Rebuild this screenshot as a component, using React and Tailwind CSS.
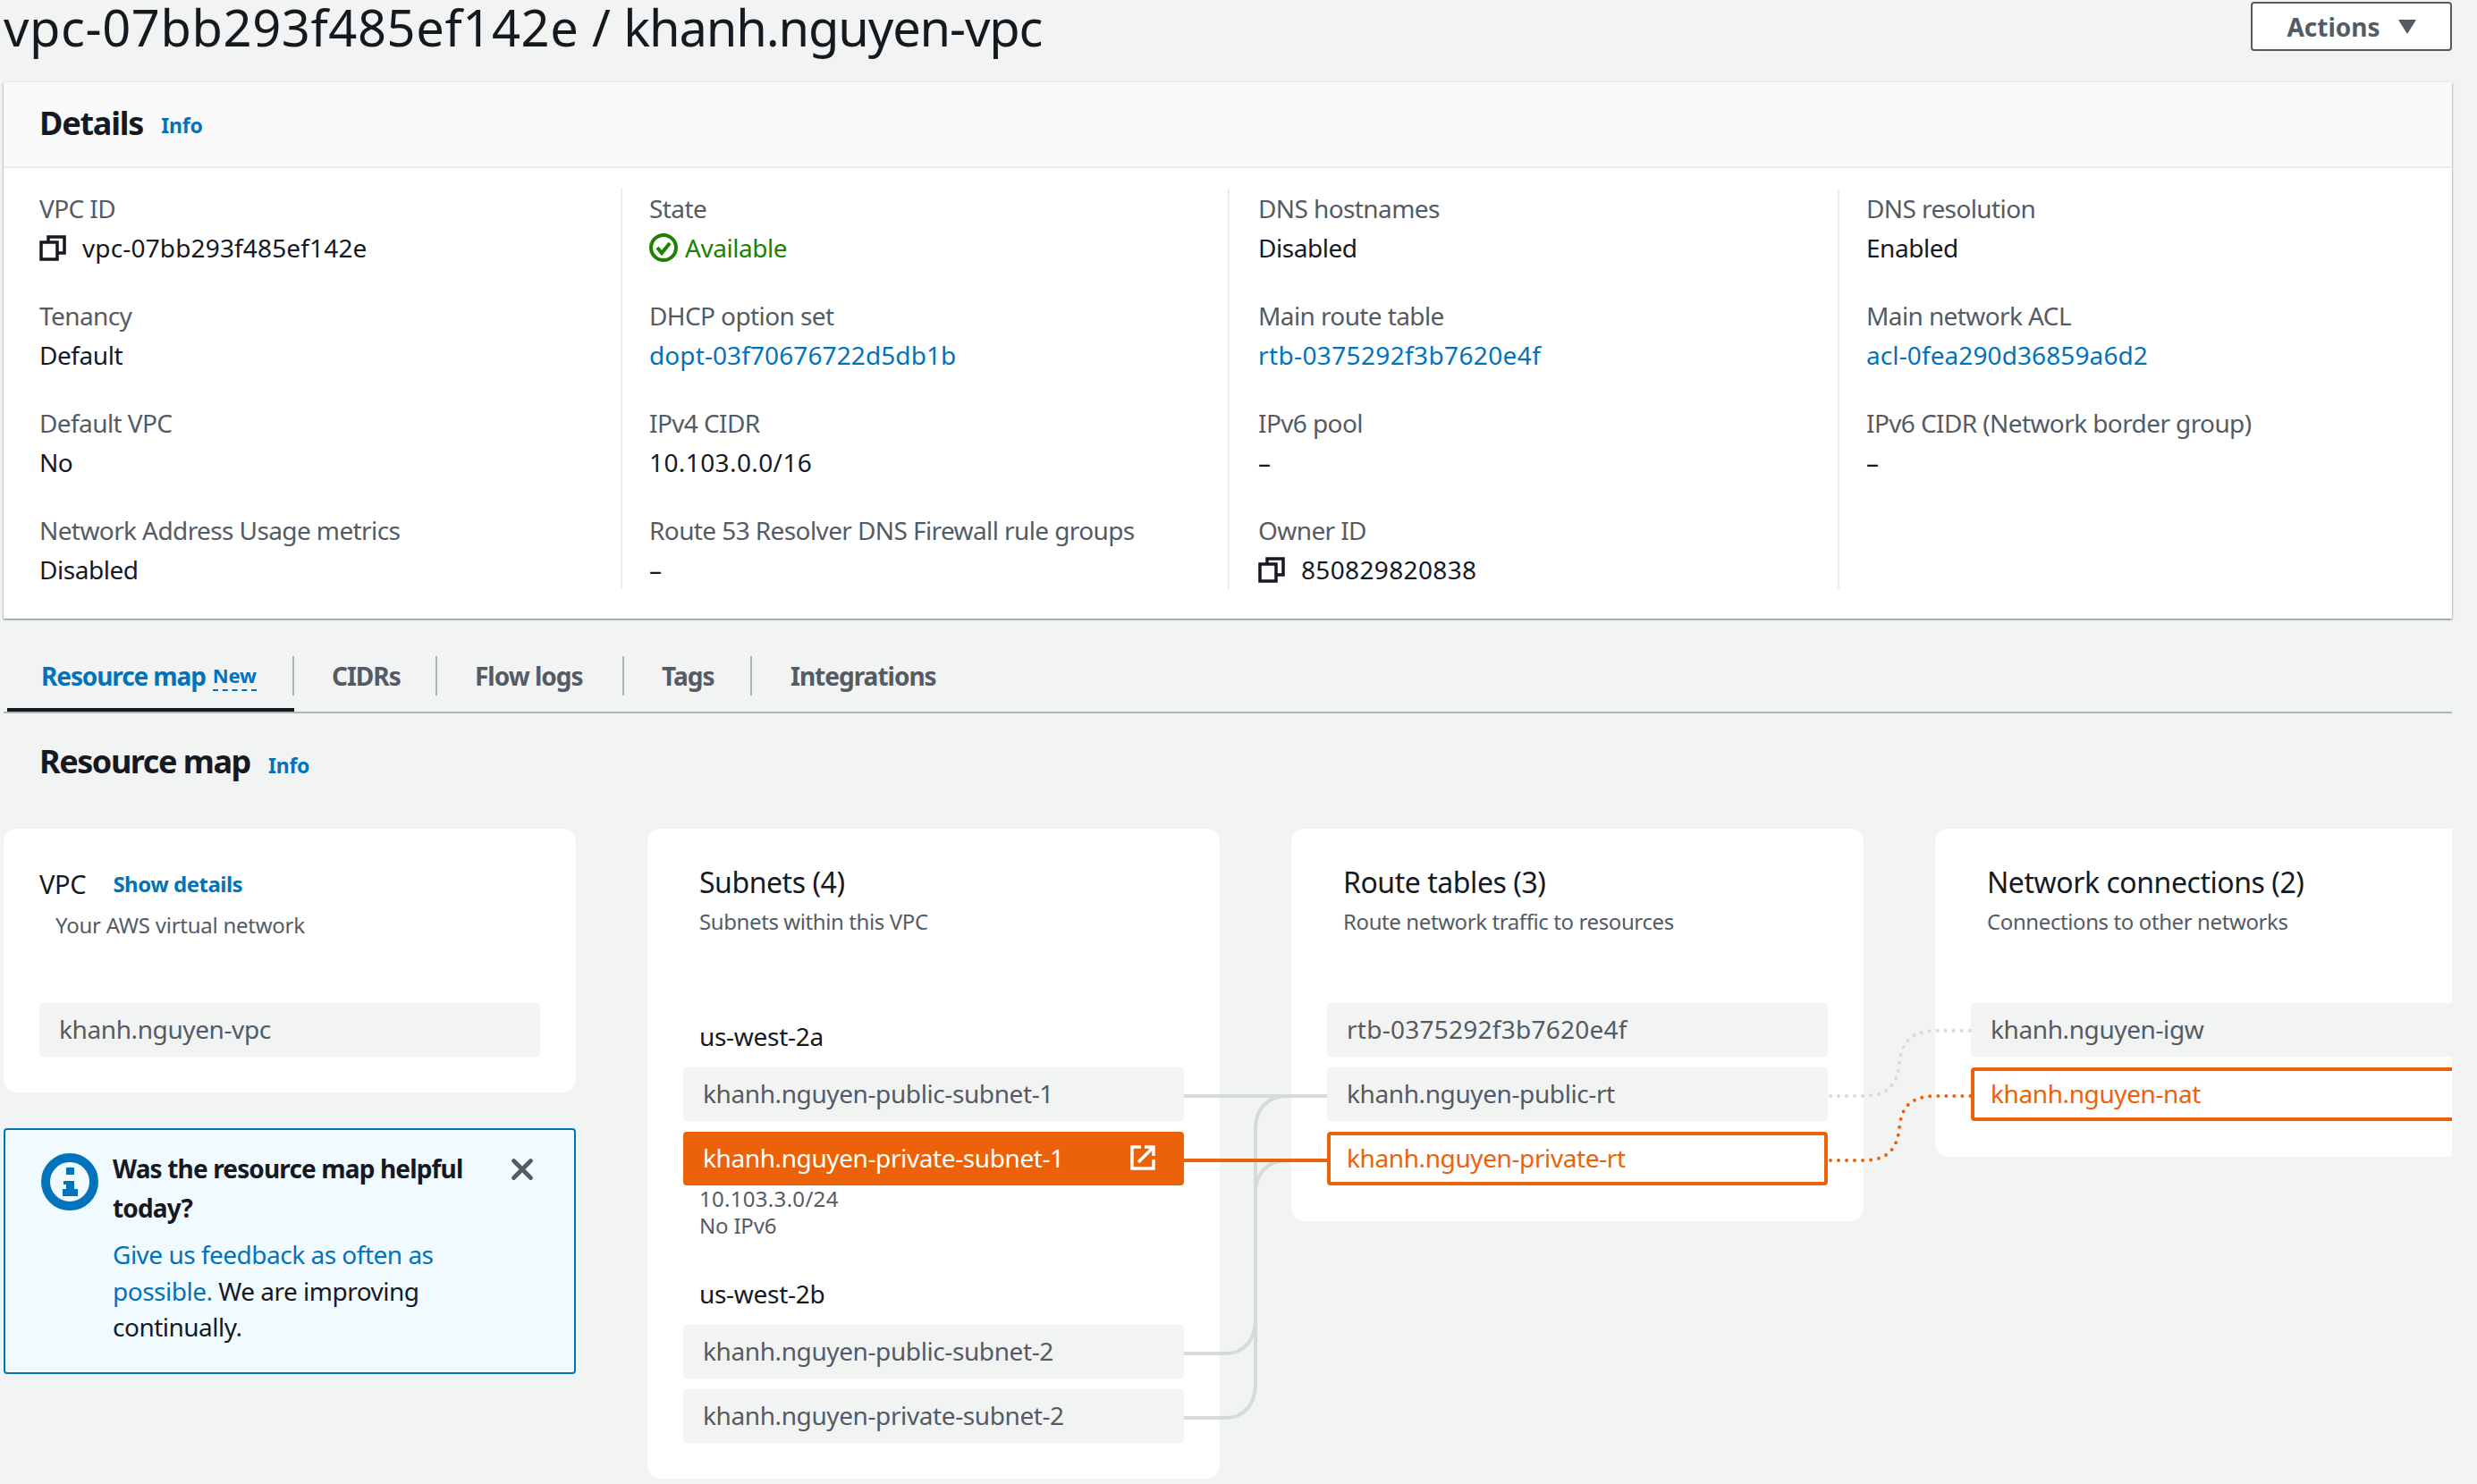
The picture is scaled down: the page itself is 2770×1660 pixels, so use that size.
import { X } from "lucide-react";

const font = { fontFamily: '"Noto Sans", sans-serif' };

const details = [
  [
    { label: "VPC ID", value: "vpc-07bb293f485ef142e", copy: true, track: "tracking-[0.15px]" },
    { label: "Tenancy", value: "Default" },
    { label: "Default VPC", value: "No" },
    { label: "Network Address Usage metrics", value: "Disabled" },
  ],
  [
    { label: "State", status: "Available" },
    { label: "DHCP option set", value: "dopt-03f70676722d5db1b", link: true, track: "tracking-[0.1px]" },
    { label: "IPv4 CIDR", value: "10.103.0.0/16", track: "tracking-[0.4px]" },
    { label: "Route 53 Resolver DNS Firewall rule groups", value: "–" },
  ],
  [
    { label: "DNS hostnames", value: "Disabled" },
    { label: "Main route table", value: "rtb-0375292f3b7620e4f", link: true, track: "tracking-[0.37px]" },
    { label: "IPv6 pool", value: "–" },
    { label: "Owner ID", value: "850829820838", copy: true, track: "tracking-[0.35px]" },
  ],
  [
    { label: "DNS resolution", value: "Enabled" },
    { label: "Main network ACL", value: "acl-0fea290d36859a6d2", link: true, track: "tracking-[0.1px]" },
    { label: "IPv6 CIDR (Network border group)", value: "–" },
  ],
];

const tabs = [
  { name: "CIDRs", width: "w-[160px]" },
  { name: "Flow logs", width: "w-[209px]" },
  { name: "Tags", width: "w-[143px]" },
  { name: "Integrations", width: "w-[300px]" },
];

function CopyIcon() {
  return (
    <svg width="30" height="30" viewBox="0 0 30 30" fill="none" stroke="#16191f" strokeWidth="3.5" className="shrink-0">
      <rect x="2" y="9" width="18" height="19" />
      <path d="M10 9V3h18v18h-8" />
    </svg>
  );
}

function StatusIcon() {
  return (
    <svg width="32" height="32" viewBox="0 0 32 32" fill="none" stroke="#1d8102" strokeWidth="4" className="shrink-0">
      <circle cx="16" cy="16" r="14" />
      <path d="M9 16l5 6 9-11" />
    </svg>
  );
}

function InfoIcon() {
  return (
    <svg width="64" height="64" viewBox="0 0 64 64" className="shrink-0">
      <circle cx="32" cy="32" r="27" fill="none" stroke="#0073bb" strokeWidth="10" />
      <rect x="28" y="16" width="9" height="8" fill="#0073bb" />
      <path d="M25 31H37V40H41V48H24V40H28V35H25Z" fill="#0073bb" />
    </svg>
  );
}

function ExternalIcon() {
  return (
    <svg width="28" height="28" viewBox="0 0 28 28" fill="none" stroke="#fff" strokeWidth="3.5" className="shrink-0">
      <path d="M12 2H2V26H26V16" />
      <path d="M9 19L24 4" />
      <path d="M16 2H26V12" />
    </svg>
  );
}

function Field({ item }) {
  return (
    <div className="h-[88px]">
      <div className="h-[44px] text-[28px] leading-[44px] tracking-[-0.6px] text-[#545b64]">{item.label}</div>
      <div className="flex h-[44px] items-center gap-[18px] text-[28px] tracking-[-0.45px]">
        {item.copy && <CopyIcon />}
        {item.status ? (
          <span className="flex items-center gap-[8px] text-[#1d8102]">
            <StatusIcon />
            {item.status}
          </span>
        ) : (
          <span className={`${item.link ? "text-[#0073bb]" : "text-[#16191f]"} ${item.track || ""}`}>{item.value}</span>
        )}
      </div>
    </div>
  );
}

function Row({ children, state, icon }) {
  const base = "flex h-[60px] items-center justify-between rounded-[4px] pb-[2px] text-[28px] tracking-[-0.4px]";
  if (state === "active") {
    return <div className={`${base} bg-[#ec6209] pl-[22px] pr-[32px] text-white`}>{children}{icon}</div>;
  }
  if (state === "selected") {
    return <div className={`${base} border-[4px] border-[#ec6209] bg-white pl-[18px] text-[#ec6209]`}>{children}</div>;
  }
  return <div className={`${base} bg-[#f2f3f3] pl-[22px] text-[#545b64]`}>{children}</div>;
}

function CardHead({ title, sub }) {
  return (
    <div className="pl-[18px]">
      <div className="text-[32px] leading-[44px] tracking-[-0.45px] text-[#16191f]">{title}</div>
      <div className="mt-[6px] text-[24px] leading-[32px] tracking-[-0.4px] text-[#545b64]">{sub}</div>
    </div>
  );
}

function Connectors() {
  return (
    <svg
      className="pointer-events-none absolute left-0 top-0 z-10"
      width="2738"
      height="733"
      viewBox="4 927 2738 733"
      fill="none"
    >
      <g stroke="#d5dbdb" strokeWidth="4">
        <path d="M1324 1226H1484" />
        <path d="M1324 1514H1370C1392 1514 1404 1498 1404 1476V1262C1404 1240 1418 1226 1440 1226" />
        <path d="M1324 1586H1370C1392 1586 1404 1570 1404 1548V1334C1404 1312 1418 1298 1440 1298" />
      </g>
      <path d="M1324 1298H1484" stroke="#ec6209" strokeWidth="4" />
      <path
        d="M2047 1226H2085C2115 1226 2122 1208 2124 1190C2126 1168 2135 1153 2165 1153H2204"
        stroke="#d5dbdb"
        strokeWidth="4"
        strokeLinecap="round"
        strokeDasharray="0 9"
      />
      <path
        d="M2047 1298H2085C2115 1298 2122 1280 2124 1262C2126 1240 2135 1226 2165 1226H2204"
        stroke="#ec6209"
        strokeWidth="4"
        strokeLinecap="round"
        strokeDasharray="0 9"
      />
    </svg>
  );
}

export default function App() {
  return (
    <div className="h-[1660px] w-[2770px] overflow-hidden bg-[#f2f3f3] pl-[4px]" style={font}>
      <div className="w-[2738px]">
        <div className="flex h-[92px] items-start justify-between">
          <h1 className="text-[56px] leading-[60px] text-[#16191f]">
            <span className="tracking-[0.6px]">vpc-07bb293f485ef142e</span> / <span className="tracking-[-1.15px]">khanh.nguyen-vpc</span>
          </h1>
          <button
            type="button"
            className="mt-[2px] flex h-[55px] w-[225px] items-center justify-center gap-[20px] rounded-[4px] border-2 border-[#545b64] bg-white text-[28px] font-bold text-[#545b64]"
          >
            Actions
            <svg width="20" height="16" viewBox="0 0 20 16" fill="#545b64">
              <path d="M0 0H20L10 16Z" />
            </svg>
          </button>
        </div>

        <section className="h-[600px] bg-white shadow-[0_1px_2px_rgba(0,28,36,0.6)]">
          <div className="flex h-[96px] items-center gap-[20px] border-b-2 border-[#eaeded] bg-[#fafafa] pb-[2px] pl-[40px]">
            <h2 className="text-[36px] font-bold tracking-[-1.2px] text-[#16191f]">Details</h2>
            <span className="mt-[4px] text-[23px] font-bold tracking-[-0.2px] text-[#0073bb]">Info</span>
          </div>
          <div className="grid grid-cols-[650px_679px_682px_1fr] pl-[40px] pt-[23px]">
            {details.map((column, i) => (
              <div
                key={i}
                className={
                  i === 0
                    ? "flex h-[448px] flex-col gap-[32px]"
                    : i === 2
                      ? "flex h-[448px] flex-col gap-[32px] border-l-2 border-[#eaeded] pl-[32px]"
                      : "flex h-[448px] flex-col gap-[32px] border-l-2 border-[#eaeded] pl-[30px]"
                }
              >
                {column.map((item) => (
                  <Field key={item.label} item={item} />
                ))}
              </div>
            ))}
          </div>
        </section>

        <nav className="mt-[42px] flex h-[64px] border-b-2 border-[#aab7b8] pl-[4px]">
          <div className="h-[62px] w-[321px] border-b-4 border-[#16191f]">
            <div className="flex h-[44px] items-center gap-[8px] border-r-2 border-[#aab7b8] pl-[38px] text-[28px] font-bold tracking-[-1.1px] text-[#0073bb]">
              Resource map
              <span className="border-b-2 border-dashed border-[#0073bb] text-[22px] leading-[32px] tracking-[-0.2px]">New</span>
            </div>
          </div>
          {tabs.map((tab, i) => (
            <div key={tab.name} className={tab.width}>
              <div
                className={
                  i === tabs.length - 1
                    ? "flex h-[44px] items-center pl-[43px] text-[28px] font-bold tracking-[-1px] text-[#545b64]"
                    : "flex h-[44px] items-center border-r-2 border-[#aab7b8] pl-[42px] text-[28px] font-bold tracking-[-1px] text-[#545b64]"
                }
              >
                {tab.name}
              </div>
            </div>
          ))}
        </nav>

        <div className="flex h-[129px] items-start gap-[20px] pl-[40px] pt-[32px]">
          <h2 className="text-[36px] font-bold leading-[44px] tracking-[-1.45px] text-[#16191f]">Resource map</h2>
          <span className="mt-[8px] text-[23px] font-bold leading-[36px] tracking-[-0.2px] text-[#0073bb]">Info</span>
        </div>

        <div className="relative flex h-[733px] items-start gap-[80px] overflow-hidden">
          <Connectors />
          <div className="w-[640px] shrink-0">
            <div className="h-[295px] rounded-[16px] bg-white px-[40px] pt-[40px]">
              <div className="flex h-[44px] items-center gap-[30px]">
                <span className="text-[29px] tracking-[-0.3px] text-[#16191f]">VPC</span>
                <span className="text-[24px] font-bold tracking-[-0.5px] text-[#0073bb]">Show details</span>
              </div>
              <div className="mt-[8px] pl-[18px] text-[24px] leading-[32px] tracking-[-0.25px] text-[#545b64]">
                Your AWS virtual network
              </div>
              <div className="mt-[71px]">
                <Row>khanh.nguyen-vpc</Row>
              </div>
            </div>
            <div className="mt-[40px] flex h-[275px] rounded-[4px] border-2 border-[#0073bb] bg-[#f1faff] pl-[40px] pt-[26px]">
              <InfoIcon />
              <div className="-mt-[5px] ml-[16px] w-[414px]">
                <div className="text-[28px] font-bold leading-[44px] tracking-[-0.85px] text-[#16191f]">
                  Was the resource map helpful today?
                </div>
                <div className="mt-[10px] text-[28px] leading-[40.5px] tracking-[-0.5px] text-[#16191f]">
                  <span className="text-[#0073bb]">Give us feedback as often as possible.</span> We are improving continually.
                </div>
              </div>
              <X size={38} strokeWidth={3} color="#545b64" className="ml-[25px] -mt-[1px] shrink-0" />
            </div>
          </div>

          <div className="h-[727px] w-[640px] shrink-0 rounded-[16px] bg-white px-[40px] pt-[38px]">
            <CardHead title="Subnets (4)" sub="Subnets within this VPC" />
            <div className="mt-[90px] pl-[18px] text-[28px] leading-[44px] tracking-[-0.3px] text-[#16191f]">us-west-2a</div>
            <div className="mt-[13px] flex flex-col gap-[12px]">
              <Row>khanh.nguyen-public-subnet-1</Row>
              <Row state="active" icon={<ExternalIcon />}>khanh.nguyen-private-subnet-1</Row>
            </div>
            <div className="pl-[18px] text-[24px] leading-[30px] tracking-[-0.2px] text-[#545b64]">
              <div className="tracking-[0.3px]">10.103.3.0/24</div>
              <div>No IPv6</div>
            </div>
            <div className="mt-[39px] pl-[18px] text-[28px] leading-[44px] tracking-[-0.3px] text-[#16191f]">us-west-2b</div>
            <div className="mt-[13px] flex flex-col gap-[12px]">
              <Row>khanh.nguyen-public-subnet-2</Row>
              <Row>khanh.nguyen-private-subnet-2</Row>
            </div>
          </div>

          <div className="h-[439px] w-[640px] shrink-0 rounded-[16px] bg-white px-[40px] pt-[38px]">
            <CardHead title="Route tables (3)" sub="Route network traffic to resources" />
            <div className="mt-[75px] flex flex-col gap-[12px]">
              <Row><span className="tracking-[0.25px]">rtb-0375292f3b7620e4f</span></Row>
              <Row>khanh.nguyen-public-rt</Row>
              <Row state="selected">khanh.nguyen-private-rt</Row>
            </div>
          </div>

          <div className="h-[367px] w-[640px] shrink-0 rounded-[16px] bg-white px-[40px] pt-[38px]">
            <CardHead title="Network connections (2)" sub="Connections to other networks" />
            <div className="mt-[75px] flex flex-col gap-[12px]">
              <Row>khanh.nguyen-igw</Row>
              <Row state="selected">khanh.nguyen-nat</Row>
            </div>
          </div>
        </div>
      </div>
    </div>
  );
}
